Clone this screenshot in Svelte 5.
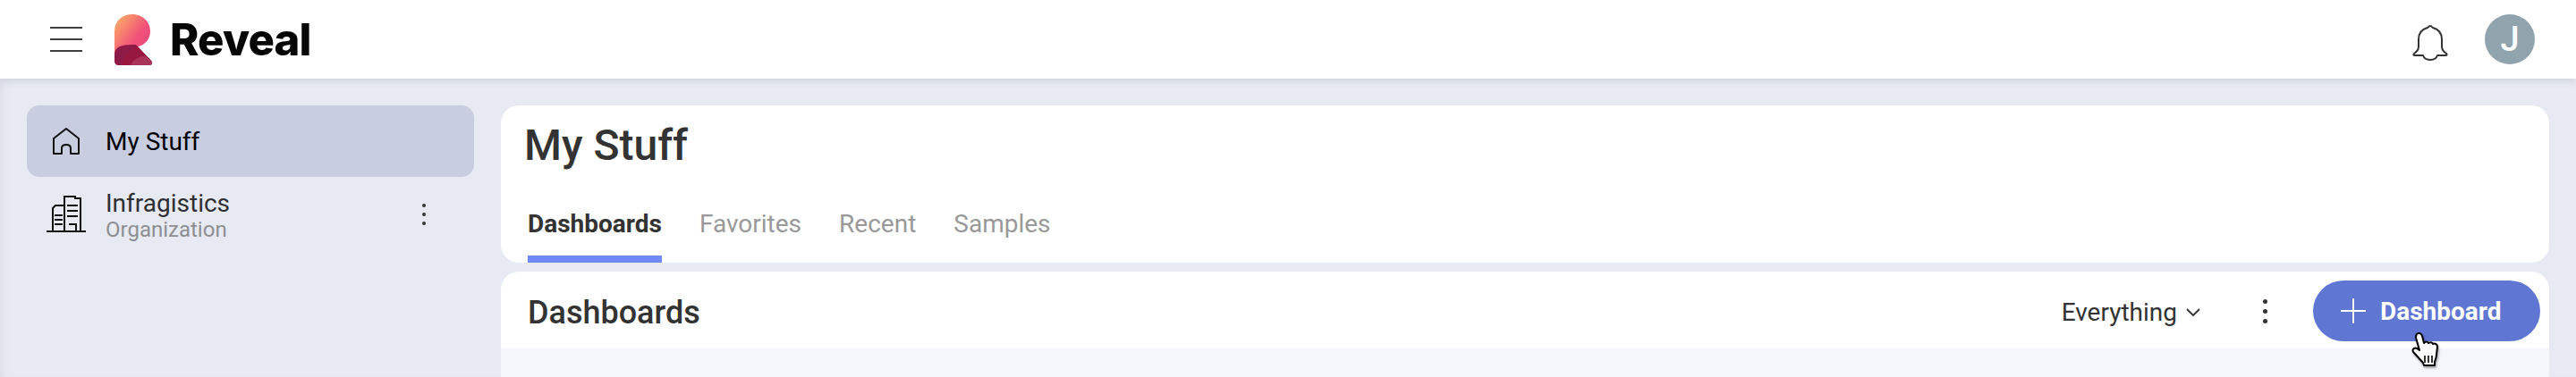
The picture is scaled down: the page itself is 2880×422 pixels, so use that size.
<script>
  const tabs = ['Dashboards', 'Favorites', 'Recent', 'Samples'];
</script>

<div class="app">
  <header class="topbar">
    <div class="brand">
      <svg class="burger" width="36" height="28" viewBox="0 0 36 28" aria-hidden="true">
        <path d="M0 1h36M0 14h36M0 27h36" stroke="#3f3f3f" stroke-width="2" fill="none" />
      </svg>
      <svg class="mark" width="42" height="58" viewBox="0 0 42 58" aria-hidden="true">
        <defs>
          <linearGradient id="rg" x1="0" y1="0" x2="1" y2="0.85">
            <stop offset="0" stop-color="#ffb863" />
            <stop offset="0.65" stop-color="#f0517a" />
            <stop offset="1" stop-color="#ee4878" />
          </linearGradient>
          <clipPath id="foot"><path d="M0 54V47C0 36 9 35 24 35L41 53c2 2 1 5-2 5H4c-2 0-4-2-4-4z" /></clipPath>
        </defs>
        <path d="M0 46V20C0 8 9 1 20 1c12 0 20 9 20 19 0 9-6 15-13 17l-10 2C8 39 2 42 0 46z" fill="url(#rg)" />
        <path d="M0 54V47C0 36 9 35 24 35L41 53c2 2 1 5-2 5H4c-2 0-4-2-4-4z" fill="#8e1a47" />
        <g clip-path="url(#foot)">
          <circle cx="34" cy="62" r="26" fill="#98173f" />
          <circle cx="34" cy="66" r="18" fill="#a8345a" />
        </g>
      </svg>
      <span class="wordmark">Reveal</span>
    </div>
    <div class="user">
      <svg class="bell" width="40" height="42" viewBox="0 0 40 42" aria-hidden="true">
        <path d="M20 3c-2 0-2 2-3 2C10 7 7 12 7 18v8c0 4-2 6-5 8-1 1-1 2 1 2h9c1 3 4 5 8 5s7-2 8-5h9c2 0 2-1 1-2-3-2-5-4-5-8v-8c0-6-3-11-10-13-1 0-1-2-3-2z" fill="none" stroke="#333" stroke-width="2" stroke-linejoin="round" />
      </svg>
      <span class="avatar">J</span>
    </div>
  </header>

  <div class="content">
    <nav class="side">
      <div class="item active">
        <svg class="ico" width="44" height="32" viewBox="0 0 44 32" aria-hidden="true">
          <path d="M8 30V13L22 2l14 11v17h-9v-6c0-3-2-4-5-4s-5 1-5 4v6z" fill="none" stroke="#111" stroke-width="2" stroke-linejoin="round" />
        </svg>
        <span class="label">My Stuff</span>
      </div>
      <div class="item org">
        <svg class="ico" width="44" height="42" viewBox="0 0 44 42" aria-hidden="true">
          <path d="M0 40h44M7 40V14l3-3h10M20 40V1h12v2h6v37M9 22h9M9 27h9M9 32h9M23 11h12M23 17h12M23 23h12M25 32h8v8" fill="none" stroke="#111" stroke-width="2" />
        </svg>
        <span class="stack">
          <span class="label">Infragistics</span>
          <span class="sub">Organization</span>
        </span>
        <span class="kebab small"><i></i><i></i><i></i></span>
      </div>
    </nav>

    <main class="main">
      <section class="card head">
        <h1>My Stuff</h1>
        <div class="tabs">
          {#each tabs as tab, i}
            <span class="tab" class:on={i === 0}>{tab}</span>
          {/each}
        </div>
      </section>

      <section class="card list">
        <div class="bar">
          <h2>Dashboards</h2>
          <div class="tools">
            <span class="filter">Everything
              <svg width="16" height="9" viewBox="0 0 16 9" aria-hidden="true">
                <path d="M1 1l7 7 7-7" fill="none" stroke="#333" stroke-width="1.8" />
              </svg>
            </span>
            <span class="kebab"><i></i><i></i><i></i></span>
            <button class="add">
              <svg width="28" height="28" viewBox="0 0 28 28" aria-hidden="true">
                <path d="M14 0v28M0 14h28" stroke="#fff" stroke-width="2" />
              </svg>
              Dashboard
            </button>
          </div>
          <svg class="cursor" width="32" height="38" viewBox="0 0 32 38" aria-hidden="true">
            <path d="M6 2c2-2 5-1 6 2l2 8c2-2 4-2 5 0 2-1 4-1 5 1 2-1 5 0 5 3l-1 9c0 3-1 5-2 8v4H14l-1-3L3 23c-2-2-2-4 0-5 2-1 4 0 6 2L5 6c0-2 0-3 1-4z" fill="#fff" stroke="#000" stroke-width="2" stroke-linejoin="round" />
            <path d="M15 26v8M19 26v8M23 26v8" stroke="#000" stroke-width="1.6" />
          </svg>
        </div>
        <div class="well"></div>
      </section>
    </main>
  </div>
</div>

<style>
  :global(body) {
    margin: 0;
    background: #e7eaf2;
  }
  .app {
    height: 422px;
    overflow: hidden;
    font-family: Roboto, "Liberation Sans", sans-serif;
    color: #333;
    display: flex;
    flex-direction: column;
    box-shadow: inset 8px 0 8px -6px #d9dce6;
  }
  .topbar {
    height: 88px;
    flex: none;
    background: #fff;
    box-shadow: 0 2px 8px rgba(60, 70, 110, 0.16);
    display: flex;
    align-items: center;
    justify-content: space-between;
    padding: 0 46px 0 56px;
    position: relative;
  }
  .brand {
    display: flex;
    align-items: center;
  }
  .burger {
    margin-right: 36px;
  }
  .mark {
    margin-right: 20px;
  }
  .wordmark {
    font-family: Inter, sans-serif;
    font-weight: 800;
    font-size: 49px;
    letter-spacing: -0.8px;
    color: #050505;
    line-height: 1;
  }
  .user {
    display: flex;
    align-items: center;
    gap: 41px;
  }
  .bell {
    margin-top: 5px;
  }
  .avatar {
    width: 56px;
    height: 56px;
    border-radius: 50%;
    background: #90a4ae;
    color: #fff;
    font-size: 38px;
    font-weight: 500;
    display: flex;
    align-items: center;
    justify-content: center;
  }
  .content {
    flex: 1;
    display: flex;
    padding: 30px 30px 0 30px;
    gap: 30px;
    min-height: 0;
  }
  .side {
    width: 500px;
    flex: none;
  }
  .item {
    height: 80px;
    border-radius: 14px;
    display: flex;
    align-items: center;
    padding: 0 22px;
    position: relative;
  }
  .active {
    background: #c8cde0;
    color: #000;
  }
  .active .label {
    padding-top: 2px;
  }
  .ico {
    margin-right: 22px;
    flex: none;
  }
  .label {
    font-size: 28px;
    line-height: 32px;
  }
  .org {
    height: 84px;
  }
  .org .label {
    color: #2f2f33;
  }
  .stack {
    display: flex;
    flex-direction: column;
    flex: 1;
    padding-top: 2px;
  }
  .sub {
    font-size: 24px;
    line-height: 26px;
    color: #8e8e93;
  }
  .kebab {
    display: flex;
    flex-direction: column;
    gap: 6px;
    align-items: center;
  }
  .kebab i {
    width: 5px;
    height: 5px;
    border-radius: 50%;
    background: #333;
    display: block;
  }
  .kebab.small {
    margin-right: 32px;
    gap: 5.5px;
  }
  .kebab.small i {
    width: 4.5px;
    height: 4.5px;
  }
  .main {
    flex: 1;
    min-width: 0;
    display: flex;
    flex-direction: column;
    gap: 10px;
  }
  .card {
    background: #fff;
    border-radius: 20px;
  }
  .head {
    height: 176px;
    flex: none;
    padding-left: 26px;
    box-sizing: border-box;
    display: flex;
    flex-direction: column;
  }
  h1 {
    margin: 17px 0 0;
    font-size: 48px;
    line-height: 56px;
    font-weight: 500;
    color: #333;
  }
  .tabs {
    margin-top: auto;
    display: flex;
    gap: 42px;
    padding-left: 4px;
  }
  .tab {
    font-size: 28px;
    color: #999;
    height: 68px;
    line-height: 50px;
    box-sizing: border-box;
  }
  .tab.on {
    color: #333;
    font-weight: 700;
    border-bottom: 8px solid #6f89f5;
  }
  .list {
    flex: 1;
    border-radius: 20px 20px 0 0;
    overflow: hidden;
    display: flex;
    flex-direction: column;
  }
  .bar {
    height: 86px;
    flex: none;
    display: flex;
    align-items: center;
    justify-content: space-between;
    padding: 0 10px 0 30px;
    position: relative;
  }
  h2 {
    margin: 0;
    padding-top: 6px;
    font-size: 36px;
    font-weight: 500;
    color: #333;
  }
  .tools {
    display: flex;
    align-items: center;
    padding-top: 2px;
  }
  .filter {
    font-size: 28px;
    color: #333;
    display: flex;
    align-items: center;
    gap: 10px;
    margin-right: 70px;
    padding-top: 2px;
  }
  .kebab:not(.small) {
    margin-right: 51px;
  }
  .add {
    width: 254px;
    height: 68px;
    border: 0;
    border-radius: 34px;
    background: #5f76d3;
    color: #fff;
    font: 700 28px Roboto, sans-serif;
    display: flex;
    align-items: center;
    padding: 0 0 0 31px;
    gap: 16px;
  }
  .cursor {
    position: absolute;
    right: 122px;
    top: 68px;
    filter: drop-shadow(1px 2px 1px rgba(0, 0, 0, 0.35));
  }
  .well {
    flex: 1;
    background: #f4f6fb;
  }
</style>
